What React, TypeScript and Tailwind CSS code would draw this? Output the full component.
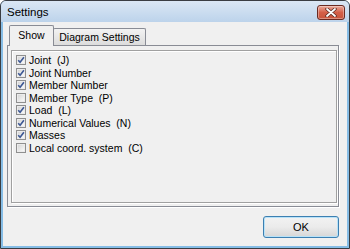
const items: { label: string; checked: boolean }[] = [
  { label: "Joint  (J)", checked: true },
  { label: "Joint Number", checked: true },
  { label: "Member Number", checked: true },
  { label: "Member Type  (P)", checked: false },
  { label: "Load  (L)", checked: true },
  { label: "Numerical Values  (N)", checked: true },
  { label: "Masses", checked: true },
  { label: "Local coord. system  (C)", checked: false },
];

const CheckBox = ({ checked }: { checked: boolean }) => (
  <svg width="10" height="10" viewBox="0 0 10 10" className="shrink-0">
    <defs>
      <linearGradient id="cbg" x1="0" y1="0" x2="1" y2="1">
        <stop offset="0" stopColor="#d4d4d4" />
        <stop offset="1" stopColor="#fbfbfb" />
      </linearGradient>
    </defs>
    <rect x="0.5" y="0.5" width="9" height="9" fill="#ffffff" stroke="#8f8f8f" />
    <rect x="1.5" y="1.5" width="7" height="7" fill="url(#cbg)" stroke="#ececec" />
    {checked && (
      <path d="M2.2 5.2 L4.1 7.3 L7.9 2.3" fill="none" stroke="#3d5894" strokeWidth="1.6" />
    )}
  </svg>
);

const App = () => {
  return (
    <div className="w-[350px] h-[249px] flex flex-col bg-[#86bde6] border border-[#3a3d42] rounded-t-[6px] overflow-hidden font-['Liberation_Sans',Arial,sans-serif] text-black">
      {/* Title bar */}
      <div className="h-[21px] shrink-0 flex justify-between items-start pl-[6px] pr-[4px] bg-gradient-to-b from-[#dbe7f4] to-[#bcd3eb]">
        <span className="text-[11.5px] leading-none mt-[6px]">Settings</span>
        <div className="mt-[4px] w-[28px] h-[15px] rounded-[3px] border border-[#6a2a22] bg-gradient-to-b from-[#e9a99b] via-[#d45f48] to-[#c8553c] flex items-center justify-center shadow-[inset_0_0_0_1px_rgba(255,255,255,0.35)]">
          <svg width="12" height="9" viewBox="0 0 12 9">
            <path d="M2 1 L10 8 M10 1 L2 8" stroke="#5a2a24" strokeWidth="3.4" strokeLinecap="round" />
            <path d="M2 1 L10 8 M10 1 L2 8" stroke="#ffffff" strokeWidth="1.8" strokeLinecap="round" />
          </svg>
        </div>
      </div>

      {/* Client area */}
      <div className="flex-1 mx-[2px] mb-[2px] bg-[#f0f0f0] flex flex-col pl-[4px] pr-[8px] pt-[3px]">
        {/* Tabs */}
        <div className="flex items-end h-[21px] -mb-[1px] relative z-10">
          <div className="ml-[2px] w-[45px] h-[21px] border border-b-0 border-[#898c95] bg-[#f0f0f0] rounded-t-[2px] flex justify-center pt-[3px] text-[10.5px] leading-[13px]">
            Show
          </div>
          <div className="-ml-[1px] mb-[1px] w-[93px] h-[17px] border border-b-0 border-[#898c95] bg-gradient-to-b from-[#f3f3f3] to-[#dcdcdc] rounded-t-[2px] flex justify-center pt-[2px] text-[10.5px] leading-[13px]">
            Diagram Settings
          </div>
        </div>

        {/* Tab panel */}
        <div className="w-[332px] h-[162px] border border-[#898c95] bg-[#f0f0f0] shadow-[1px_1px_0_#ffffff]">
          <div className="ml-[3px] mt-[4px] w-[326px] h-[153px] border border-[#a0a0a0] shadow-[inset_1px_1px_0_#ffffff,1px_1px_0_#ffffff] pl-[4px] pt-[3px]">
            {items.map((item) => (
              <div key={item.label} className="h-[12.5px] flex items-center gap-[3px]">
                <CheckBox checked={item.checked} />
                <span className="text-[10.5px] leading-none whitespace-pre">{item.label}</span>
              </div>
            ))}
          </div>
        </div>

        {/* Buttons */}
        <div className="flex justify-end mt-[9px]">
          <button className="w-[76px] h-[22px] rounded-[3px] border border-[#3c7fb1] bg-gradient-to-b from-[#f2f2f2] via-[#ebebeb] to-[#d6d6d6] shadow-[inset_0_0_0_1px_#b8e2f8] text-[11px] leading-none">
            OK
          </button>
        </div>
      </div>
    </div>
  );
};

export default App;
